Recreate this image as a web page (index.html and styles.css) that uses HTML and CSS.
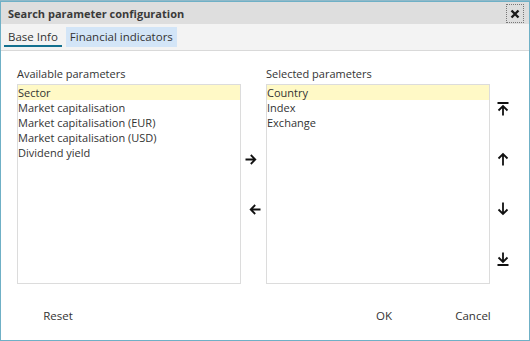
FILE: index.html
```html
<!DOCTYPE html>
<html>
<head>
<meta charset="utf-8">
<link rel="stylesheet" href="styles.css">
</head>
<body>
<div class="dialog">
  <div class="titlebar">
    <span class="title">Search parameter configuration</span>
    <span class="close">
      <svg width="10" height="10" viewBox="0 0 10 10"><path d="M1.5 1.5 L8.5 8.5 M8.5 1.5 L1.5 8.5" stroke="#1a1a1a" stroke-width="2.4" fill="none"/></svg>
    </span>
  </div>
  <div class="tabs">
    <span class="tab active">Base Info</span>
    <span class="tab hover">Financial indicators</span>
  </div>
  <div class="content">
    <div class="col">
      <div class="label">Available parameters</div>
      <div class="list">
        <div class="item sel">Sector</div>
        <div class="item">Market capitalisation</div>
        <div class="item">Market capitalisation (EUR)</div>
        <div class="item">Market capitalisation (USD)</div>
        <div class="item">Dividend yield</div>
      </div>
    </div>
    <div class="mid">
      <div class="slot slot-right">
        <svg width="12" height="11" viewBox="0 0 12 11"><path d="M0.5 5.5 H10.5 M5.8 1 L10.3 5.5 L5.8 10" stroke="#111" stroke-width="1.8" fill="none"/></svg>
      </div>
      <div class="slot slot-left">
        <svg width="12" height="11" viewBox="0 0 12 11"><path d="M11.5 5.5 H1.5 M6.2 1 L1.7 5.5 L6.2 10" stroke="#111" stroke-width="1.8" fill="none"/></svg>
      </div>
    </div>
    <div class="col">
      <div class="label">Selected parameters</div>
      <div class="list">
        <div class="item sel">Country</div>
        <div class="item">Index</div>
        <div class="item">Exchange</div>
      </div>
    </div>
    <div class="side">
      <div class="slot">
        <svg width="12" height="14" viewBox="0 0 12 14"><path d="M0.5 1 H11.5 M6 4 V13.5 M1.5 8.5 L6 4 L10.5 8.5" stroke="#111" stroke-width="1.8" fill="none"/></svg>
      </div>
      <div class="slot">
        <svg width="12" height="14" viewBox="0 0 12 14"><path d="M6 2 V13.5 M1.5 6.5 L6 2 L10.5 6.5" stroke="#111" stroke-width="1.8" fill="none"/></svg>
      </div>
      <div class="slot">
        <svg width="12" height="14" viewBox="0 0 12 14"><path d="M6 0.5 V12 M1.5 7.5 L6 12 L10.5 7.5" stroke="#111" stroke-width="1.8" fill="none"/></svg>
      </div>
      <div class="slot">
        <svg width="12" height="14" viewBox="0 0 12 14"><path d="M6 0.5 V10 M1.5 5.5 L6 10 L10.5 5.5 M0.5 13 H11.5" stroke="#111" stroke-width="1.8" fill="none"/></svg>
      </div>
    </div>
  </div>
  <div class="footer">
    <span class="btn">Reset</span>
    <span class="spacer"></span>
    <span class="btn">OK</span>
    <span class="btn">Cancel</span>
  </div>
</div>
</body>
</html>
```

FILE: styles.css
```css
* { box-sizing: border-box; }
html, body {
  margin: 0;
  padding: 0;
  background: #8fb9c9;
  font-family: "Open Sans", "DejaVu Sans", sans-serif;
  color: #333;
}
.dialog {
  margin-top: 1px;
  width: 530px;
  height: 340px;
  border: 1px solid #6fb0c6;
  background: #fff;
  display: flex;
  flex-direction: column;
}
.titlebar {
  height: 22px;
  background: #dedede;
  display: flex;
  align-items: center;
  padding-left: 7px;
  padding-right: 5px;
}
.title {
  font-size: 11px;
  font-weight: 700;
  color: #3a3a3a;
  flex: 1;
}
.close {
  width: 18px;
  height: 19px;
  border: 1px dotted #777;
  display: flex;
  align-items: center;
  justify-content: center;
  margin-top: 1px;
}
.tabs {
  height: 27px;
  background: #f3f3f3;
  border-bottom: 1px solid #d9d9d9;
  display: flex;
  align-items: flex-start;
  padding-left: 3px;
  padding-top: 3px;
  gap: 4px;
}
.tab {
  height: 20px;
  padding: 0 4px;
  font-size: 11.5px;
  line-height: 19px;
  color: #333;
}
.tab.active {
  border-bottom: 2px solid #13708f;
}
.tab.hover {
  background: #d3e5f7;
}
.content {
  display: flex;
  padding: 15px 0 0 16px;
}
.col {
  width: 224px;
  display: flex;
  flex-direction: column;
}
.label {
  font-size: 11px;
  line-height: 15px;
  height: 15px;
  margin-bottom: 3px;
  color: #333;
}
.list {
  height: 200px;
  border: 1px solid #dcdcdc;
  background: #fff;
}
.item {
  font-size: 11px;
  height: 15px;
  line-height: 15px;
  color: #333;
}
.item.sel {
  background: #fff9c6;
}
.mid {
  width: 25px;
  margin-top: 18px;
  height: 200px;
  display: flex;
  flex-direction: column;
  justify-content: center;
}
.slot {
  height: 50px;
  display: flex;
  align-items: center;
  justify-content: center;
}
.slot-right { padding-right: 6px; }
.slot-left { padding-left: 2px; }
.side {
  width: 25px;
  margin-top: 18px;
  height: 200px;
  display: flex;
  flex-direction: column;
  justify-content: space-around;
}
.footer {
  flex: 1;
  display: flex;
  align-items: center;
  padding: 6px 20px 0 21px;
  gap: 17px;
}
.spacer { flex: 1; }
.btn {
  width: 72px;
  text-align: center;
  font-size: 11.5px;
  color: #333;
}
```
